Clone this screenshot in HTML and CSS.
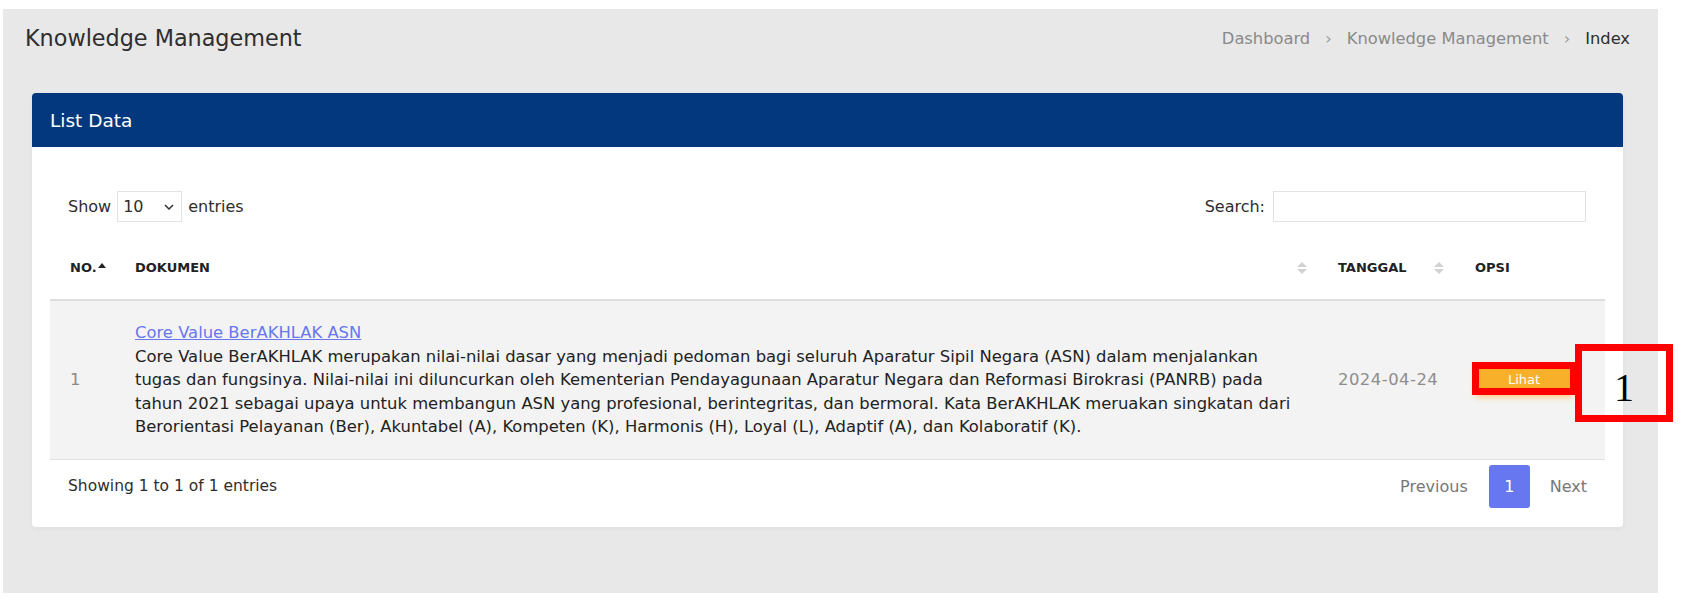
FILE: index.html
```html
<!DOCTYPE html>
<html lang="en">
<head>
    <meta charset="UTF-8">
    <meta name="viewport" content="width=device-width, initial-scale=1.0">
    <title>Knowledge Management</title>
    <link rel="stylesheet" href="styles.css">
</head>
<body>
    <div class="main-content">
        <div class="section-header">
            <h1>Knowledge Management</h1>
            <div class="breadcrumb">
                <span class="breadcrumb-item">Dashboard</span>
                <span class="breadcrumb-item">Knowledge Management</span>
                <span class="breadcrumb-item active">Index</span>
            </div>
        </div>

        <div class="card">
            <div class="card-header">
                <h4>List Data</h4>
            </div>
            <div class="card-body">
                <div class="dt-top">
                    <label class="dt-length">Show
                        <span class="select-wrap">
                            <select name="length">
                                <option value="10">10</option>
                                <option value="25">25</option>
                                <option value="50">50</option>
                            </select>
                            <svg class="chevron" width="10" height="6" viewBox="0 0 10 6"><path d="M1 1l4 4 4-4" fill="none" stroke="#333" stroke-width="1.5"/></svg>
                        </span>
                        entries</label>
                    <label class="dt-search">Search: <input type="search"></label>
                </div>

                <table class="data-table">
                    <colgroup>
                        <col style="width: 70px">
                        <col style="width: 1203px">
                        <col style="width: 137px">
                        <col style="width: 145px">
                    </colgroup>
                    <thead>
                        <tr>
                            <th class="sorted"><div class="th-inner">NO.<span class="sort-asc"></span></div></th>
                            <th><div class="th-inner">DOKUMEN<span class="sort-both"></span></div></th>
                            <th><div class="th-inner">TANGGAL<span class="sort-both"></span></div></th>
                            <th>OPSI</th>
                        </tr>
                    </thead>
                    <tbody>
                        <tr>
                            <td class="no">1</td>
                            <td class="doc">
                                <a href="#">Core Value BerAKHLAK ASN</a><br>
                                Core Value BerAKHLAK merupakan nilai-nilai dasar yang menjadi pedoman bagi seluruh Aparatur Sipil Negara (ASN) dalam menjalankan tugas dan fungsinya. Nilai-nilai ini diluncurkan oleh Kementerian Pendayagunaan Aparatur Negara dan Reformasi Birokrasi (PANRB) pada tahun 2021 sebagai upaya untuk membangun ASN yang profesional, berintegritas, dan bermoral. Kata BerAKHLAK meruakan singkatan dari Berorientasi Pelayanan (Ber), Akuntabel (A), Kompeten (K), Harmonis (H), Loyal (L), Adaptif (A), dan Kolaboratif (K).
                            </td>
                            <td class="date">2024-04-24</td>
                            <td class="opsi"><a href="#" class="btn-lihat">Lihat</a></td>
                        </tr>
                    </tbody>
                </table>

                <div class="dt-bottom">
                    <div class="dt-info">Showing 1 to 1 of 1 entries</div>
                    <ul class="pagination">
                        <li class="page-item prev"><a href="#">Previous</a></li>
                        <li class="page-item active"><a href="#">1</a></li>
                        <li class="page-item next"><a href="#">Next</a></li>
                    </ul>
                </div>
            </div>
        </div>
    </div>

    <div class="mark mark-btn"></div>
    <div class="mark mark-num">1</div>
</body>
</html>
```

FILE: styles.css
```css
body {
    margin: 0;
    background: #fff;
    font-family: "DejaVu Sans", sans-serif;
    color: #333;
}

.main-content {
    width: 1655px;
    height: 584px;
    margin: 9px 0 0 3px;
    background: #e8e8e8;
    overflow: hidden;
}

.section-header {
    display: flex;
    justify-content: space-between;
    align-items: center;
    height: 58px;
    padding: 0 28px 0 22px;
}

.section-header h1 {
    margin: 0;
    font-size: 22.3px;
    font-weight: 400;
    color: #2e2e2e;
}

.breadcrumb {
    display: flex;
    font-size: 16.3px;
    color: #8a8a8a;
}

.breadcrumb-item + .breadcrumb-item::before {
    content: "›";
    padding: 0 15px;
    color: #999;
}

.breadcrumb-item.active {
    color: #2e2e2e;
}

.card {
    margin: 26px 35px 0 29px;
    background: #fff;
    border-radius: 4px;
    box-shadow: 0 2px 6px rgba(0, 0, 0, 0.04);
    overflow: hidden;
}

.card-header {
    display: flex;
    align-items: center;
    height: 54px;
    padding: 0 18px;
    background: #03387e;
}

.card-header h4 {
    margin: 0;
    font-size: 18.5px;
    font-weight: 400;
    color: #fff;
}

.card-body {
    padding: 44px 18px 19px;
}

.dt-top {
    display: flex;
    justify-content: space-between;
    align-items: center;
    height: 31px;
    padding: 0 19px 0 18px;
}

.dt-length,
.dt-search {
    display: flex;
    align-items: center;
    font-size: 16px;
    color: #2e2e2e;
}

.select-wrap {
    position: relative;
    margin: 0 6px 0 6px;
}

.select-wrap select {
    appearance: none;
    -webkit-appearance: none;
    display: block;
    width: 65px;
    height: 31px;
    padding: 0 0 0 5px;
    border: 1px solid #e3e3e3;
    background: #fff;
    font-family: "DejaVu Sans", sans-serif;
    font-size: 16px;
    color: #2e2e2e;
}

.select-wrap .chevron {
    position: absolute;
    left: 47px;
    top: 13px;
    pointer-events: none;
}

.dt-search input {
    width: 313px;
    height: 31px;
    margin-left: 8px;
    border: 1px solid #e3e3e3;
    box-sizing: border-box;
}

.data-table {
    width: 100%;
    margin-top: 15px;
    border-collapse: collapse;
    table-layout: fixed;
}

.data-table th {
    padding: 21px 16px 21px 15px;
    border-bottom: 2px solid #dedede;
    font-size: 13px;
    font-weight: 700;
    line-height: 20px;
    text-align: left;
    color: #222;
}

.data-table th:first-child {
    padding-left: 20px;
}

.th-inner {
    display: flex;
    justify-content: space-between;
    align-items: center;
}

.sorted .th-inner {
    justify-content: flex-start;
}

.sort-asc {
    align-self: flex-start;
    margin: 5px 0 0 1px;
    border-left: 4.5px solid transparent;
    border-right: 4.5px solid transparent;
    border-bottom: 5px solid #222;
}

.sort-both {
    display: flex;
    flex-direction: column;
    gap: 2px;
}

.sort-both::before,
.sort-both::after {
    content: "";
    border-left: 5px solid transparent;
    border-right: 5px solid transparent;
}

.sort-both::before {
    border-bottom: 5.5px solid #d2d2d2;
}

.sort-both::after {
    border-top: 5.5px solid #d2d2d2;
}

.data-table td {
    padding: 20px 15px;
    background: #f3f3f3;
    border-bottom: 1px solid #e2e2e2;
    font-size: 16.4px;
    line-height: 23.5px;
    vertical-align: middle;
}

.data-table td.no {
    padding-left: 20px;
    color: #8a8a8a;
}

.data-table td.doc {
    padding-right: 20px;
    color: #222;
}

.doc a {
    color: #6777ef;
    text-decoration: underline;
}

.data-table td.date {
    color: #8d8d8d;
    letter-spacing: 0.5px;
}

.data-table td.opsi {
    padding-left: 16px;
}

.btn-lihat {
    display: inline-block;
    width: 96px;
    height: 30px;
    line-height: 30px;
    border-radius: 3px;
    background: #f8b02a;
    box-shadow: 0 2px 6px #ffc473;
    font-size: 13px;
    text-align: center;
    text-decoration: none;
    color: #fff;
    vertical-align: middle;
}

.dt-bottom {
    display: flex;
    justify-content: space-between;
    align-items: center;
    height: 43px;
    margin-top: 5px;
    padding: 0 18px;
}

.dt-info {
    font-size: 15.5px;
    color: #2e2e2e;
}

.pagination {
    display: flex;
    align-items: center;
    margin: 0;
    padding: 0;
    list-style: none;
    font-size: 16px;
}

.page-item a {
    color: #777;
    text-decoration: none;
}

.page-item.prev {
    margin-right: 21px;
}

.page-item.next {
    margin-left: 20px;
}

.page-item.active a {
    display: block;
    width: 41px;
    height: 43px;
    line-height: 43px;
    border-radius: 3px;
    background: #6777ef;
    text-align: center;
    color: #fff;
}

/* annotation boxes */
.mark {
    position: absolute;
    border: 7px solid #ff0000;
    box-sizing: border-box;
}

.mark-btn {
    left: 1472px;
    top: 362px;
    width: 105px;
    height: 33px;
}

.mark-num {
    left: 1575px;
    top: 344px;
    width: 98px;
    height: 78px;
    display: flex;
    align-items: center;
    justify-content: center;
    padding-top: 8px;
    font-family: "Liberation Serif", serif;
    font-size: 40px;
    color: #000;
}
```
